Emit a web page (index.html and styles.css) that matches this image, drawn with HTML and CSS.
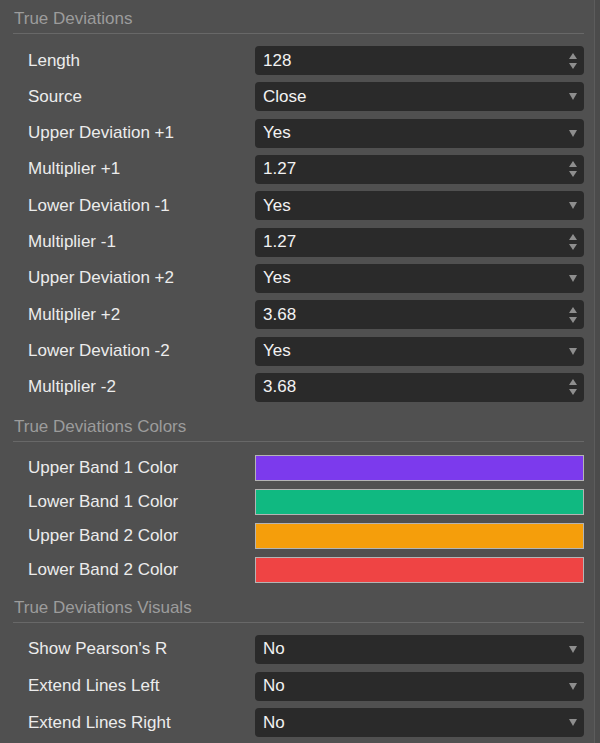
FILE: index.html
```html
<!DOCTYPE html>
<html>
<head>
<meta charset="utf-8">
<link rel="stylesheet" href="styles.css">
</head>
<body>
<div class="panel">
  <section class="group">
    <div class="group-title">True Deviations</div>
    <div class="rows">
      <div class="row"><span class="label">Length</span><div class="field"><span>128</span><span class="spin"><i class="up"></i><i class="down"></i></span></div></div>
      <div class="row"><span class="label">Source</span><div class="field"><span>Close</span><i class="caret"></i></div></div>
      <div class="row"><span class="label">Upper Deviation +1</span><div class="field"><span>Yes</span><i class="caret"></i></div></div>
      <div class="row"><span class="label">Multiplier +1</span><div class="field"><span>1.27</span><span class="spin"><i class="up"></i><i class="down"></i></span></div></div>
      <div class="row"><span class="label">Lower Deviation -1</span><div class="field"><span>Yes</span><i class="caret"></i></div></div>
      <div class="row"><span class="label">Multiplier -1</span><div class="field"><span>1.27</span><span class="spin"><i class="up"></i><i class="down"></i></span></div></div>
      <div class="row"><span class="label">Upper Deviation +2</span><div class="field"><span>Yes</span><i class="caret"></i></div></div>
      <div class="row"><span class="label">Multiplier +2</span><div class="field"><span>3.68</span><span class="spin"><i class="up"></i><i class="down"></i></span></div></div>
      <div class="row"><span class="label">Lower Deviation -2</span><div class="field"><span>Yes</span><i class="caret"></i></div></div>
      <div class="row"><span class="label">Multiplier -2</span><div class="field"><span>3.68</span><span class="spin"><i class="up"></i><i class="down"></i></span></div></div>
    </div>
  </section>
  <section class="group">
    <div class="group-title">True Deviations Colors</div>
    <div class="rows colors">
      <div class="row"><span class="label">Upper Band 1 Color</span><div class="swatch purple"></div></div>
      <div class="row"><span class="label">Lower Band 1 Color</span><div class="swatch green"></div></div>
      <div class="row"><span class="label">Upper Band 2 Color</span><div class="swatch orange"></div></div>
      <div class="row"><span class="label">Lower Band 2 Color</span><div class="swatch red"></div></div>
    </div>
  </section>
  <section class="group">
    <div class="group-title">True Deviations Visuals</div>
    <div class="rows visuals">
      <div class="row"><span class="label">Show Pearson's R</span><div class="field"><span>No</span><i class="caret"></i></div></div>
      <div class="row"><span class="label">Extend Lines Left</span><div class="field"><span>No</span><i class="caret"></i></div></div>
      <div class="row"><span class="label">Extend Lines Right</span><div class="field"><span>No</span><i class="caret"></i></div></div>
    </div>
  </section>
</div>
</body>
</html>
```

FILE: styles.css
```css
html, body {
  margin: 0;
  padding: 0;
  background: #4b4b4b;
}
body {
  width: 600px;
  height: 743px;
  overflow: hidden;
  font-family: "Liberation Sans", Arial, sans-serif;
}
.panel {
  width: 595px;
  height: 743px;
  box-sizing: border-box;
  background: #505050;
  border-right: 1px solid #5c5c5c;
  padding: 0 10px 0 13px;
}
.group-title {
  height: 20px;
  font-size: 17px;
  line-height: 20px;
  color: #9c9c9c;
  padding: 9px 0 4px 1px;
  border-bottom: 1px solid #686868;
}
.rows {
  display: flex;
  flex-direction: column;
  gap: 7.33px;
  padding: 12px 0 6px 15px;
}
.rows.colors {
  gap: 8px;
  padding-top: 13px;
  padding-bottom: 6px;
}
.rows.visuals {
  gap: 7.67px;
  padding-top: 12px;
}
.row {
  display: grid;
  grid-template-columns: 227px 1fr;
  align-items: center;
}
.label {
  font-size: 17px;
  color: #ececec;
  line-height: 20px;
}
.field {
  height: 29px;
  box-sizing: border-box;
  background: #2a2a2a;
  border-radius: 4px;
  display: flex;
  align-items: center;
  justify-content: space-between;
  padding: 0 7px 0 8px;
  font-size: 17px;
  color: #f2f2f2;
}
.caret {
  width: 0;
  height: 0;
  border-left: 4px solid transparent;
  border-right: 4px solid transparent;
  border-top: 7px solid #8e8e8e;
}
.spin {
  display: flex;
  flex-direction: column;
  gap: 4px;
}
.spin .up {
  width: 0;
  height: 0;
  border-left: 4px solid transparent;
  border-right: 4px solid transparent;
  border-bottom: 6px solid #8e8e8e;
}
.spin .down {
  width: 0;
  height: 0;
  border-left: 4px solid transparent;
  border-right: 4px solid transparent;
  border-top: 6px solid #8e8e8e;
}
.swatch {
  height: 26px;
  box-sizing: border-box;
  border: 1px solid #b4b4b4;
}
.purple { background: #7c3aed; }
.green { background: #10b981; }
.orange { background: #f59e0b; }
.red { background: #ef4444; }
```
